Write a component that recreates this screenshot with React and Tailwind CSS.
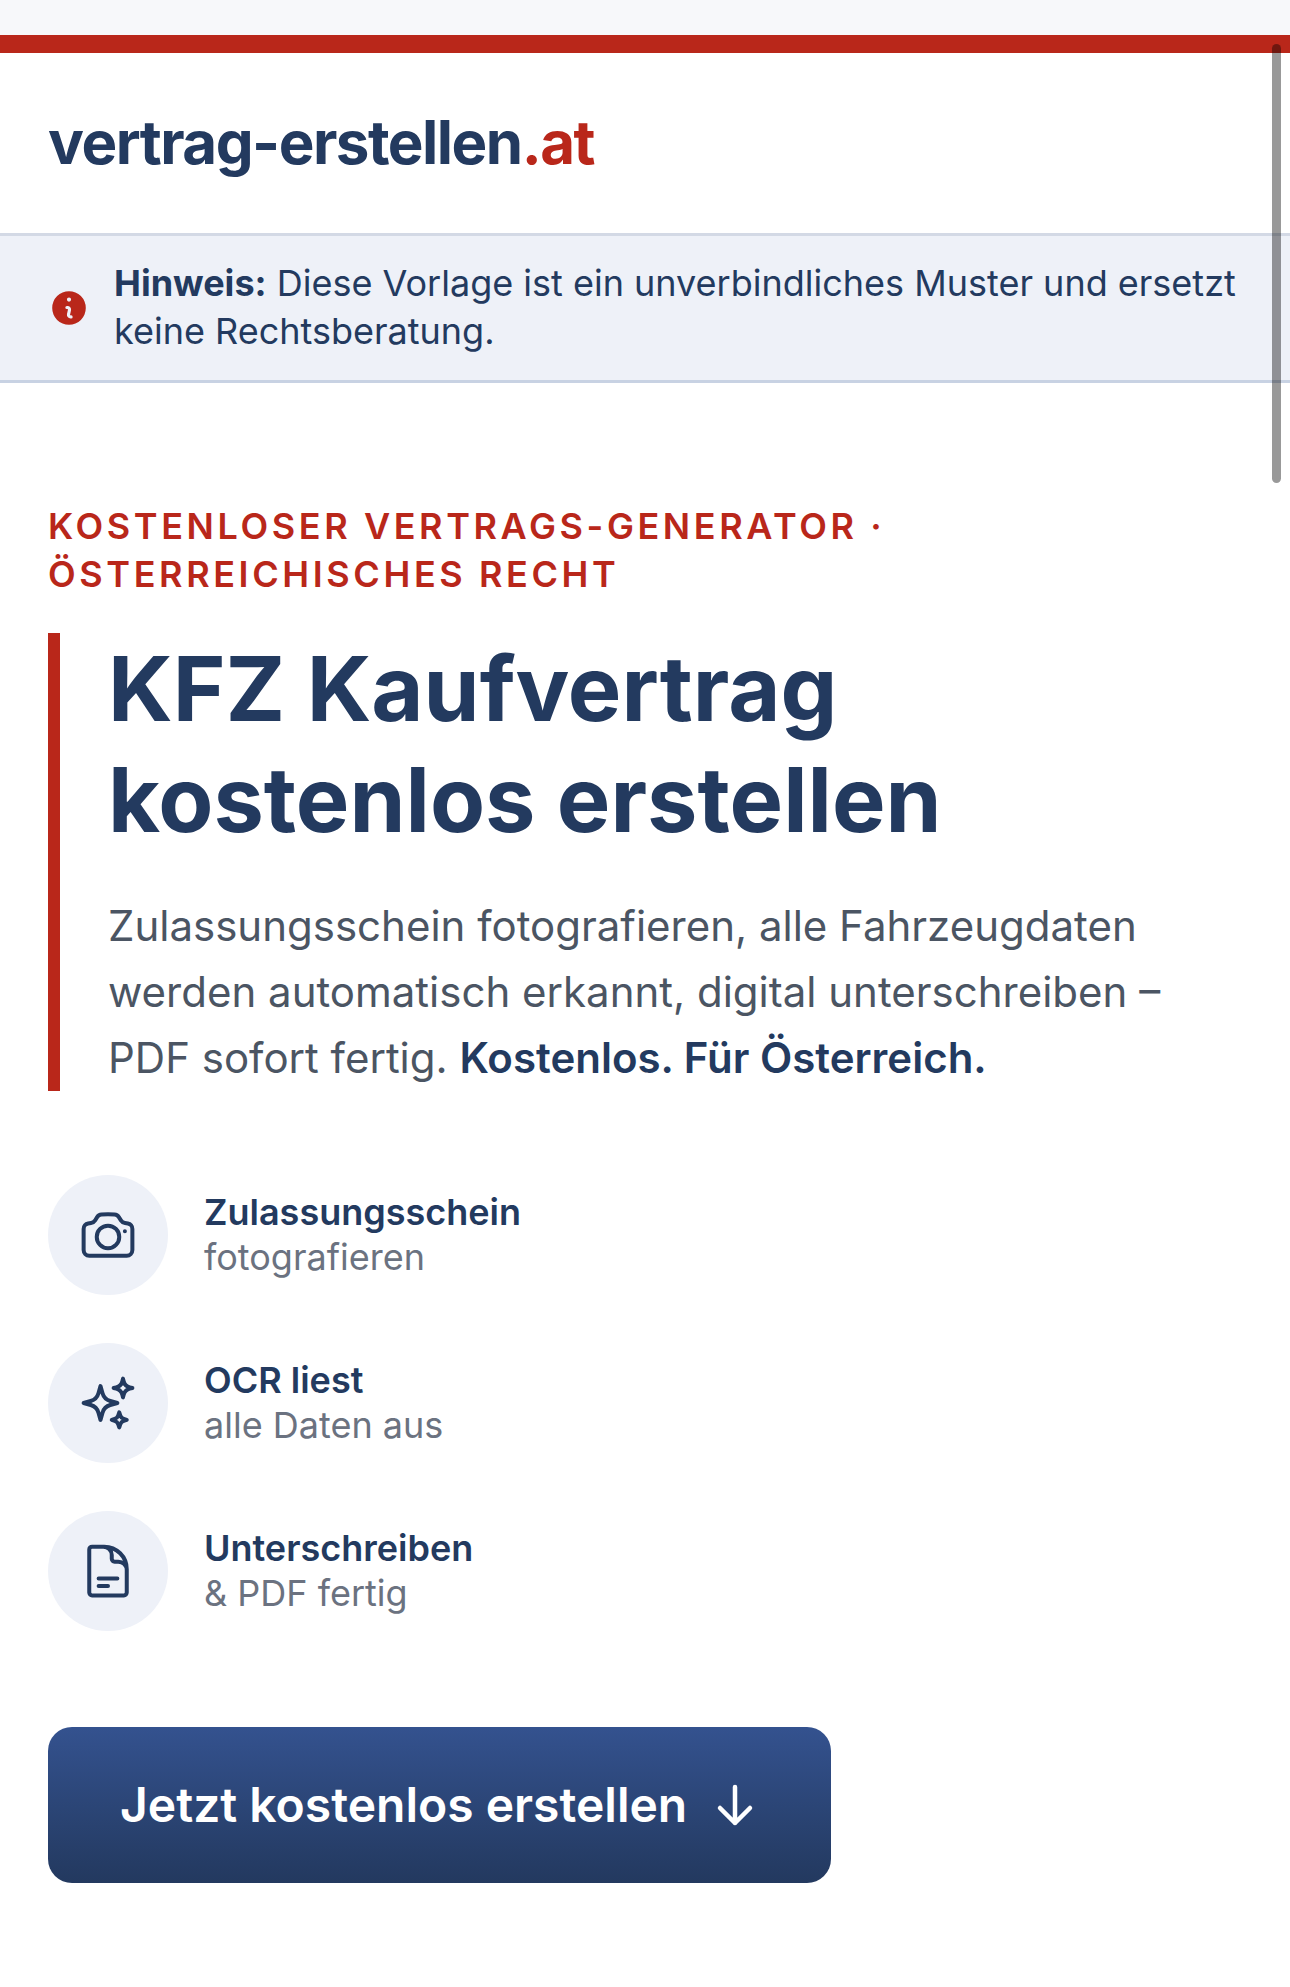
const steps = [
  { title: 'Zulassungsschein', sub: 'fotografieren', icon: 'camera' },
  { title: 'OCR liest', sub: 'alle Daten aus', icon: 'sparkles' },
  { title: 'Unterschreiben', sub: '& PDF fertig', icon: 'document' },
]

const iconPaths = {
  camera: (
    <>
      <path d="M6.827 6.175A2.31 2.31 0 0 1 5.186 7.23c-.38.054-.757.112-1.134.175C2.999 7.58 2.25 8.507 2.25 9.574V18a2.25 2.25 0 0 0 2.25 2.25h15A2.25 2.25 0 0 0 21.75 18V9.574c0-1.067-.75-1.994-1.802-2.169a47.865 47.865 0 0 0-1.134-.175 2.31 2.31 0 0 1-1.64-1.055l-.822-1.316a2.192 2.192 0 0 0-1.736-1.039 48.774 48.774 0 0 0-5.232 0 2.192 2.192 0 0 0-1.736 1.039l-.821 1.316Z" />
      <path d="M16.5 12.75a4.5 4.5 0 1 1-9 0 4.5 4.5 0 0 1 9 0ZM18.75 10.5h.008v.008h-.008V10.5Z" />
    </>
  ),
  sparkles: (
    <path d="M9.813 15.904 9 18.75l-.813-2.846a4.5 4.5 0 0 0-3.09-3.09L2.25 12l2.846-.813a4.5 4.5 0 0 0 3.09-3.09L9 5.25l.813 2.846a4.5 4.5 0 0 0 3.09 3.09L15.75 12l-2.846.813a4.5 4.5 0 0 0-3.09 3.09ZM18.259 8.715 18 9.75l-.259-1.035a3.375 3.375 0 0 0-2.455-2.456L14.25 6l1.036-.259a3.375 3.375 0 0 0 2.455-2.456L18 2.25l.259 1.035a3.375 3.375 0 0 0 2.456 2.456L21.75 6l-1.035.259a3.375 3.375 0 0 0-2.456 2.456ZM16.894 20.567 16.5 21.75l-.394-1.183a2.25 2.25 0 0 0-1.423-1.423L13.5 18.75l1.183-.394a2.25 2.25 0 0 0 1.423-1.423l.394-1.183.394 1.183a2.25 2.25 0 0 0 1.423 1.423l1.183.394-1.183.394a2.25 2.25 0 0 0-1.423 1.423Z" />
  ),
  document: (
    <path d="M19.5 14.25v-2.625a3.375 3.375 0 0 0-3.375-3.375h-1.5A1.125 1.125 0 0 1 13.5 7.125v-1.5a3.375 3.375 0 0 0-3.375-3.375H8.25m0 12.75h7.5m-7.5 3H12M10.5 2.25H5.625c-.621 0-1.125.504-1.125 1.125v17.25c0 .621.504 1.125 1.125 1.125h12.75c.621 0 1.125-.504 1.125-1.125V11.25a9 9 0 0 0-9-9Z" />
  ),
}

const Step = ({ title, sub, icon }) => (
  <div className="flex items-center gap-[36px]">
    <div className="w-[120px] h-[120px] rounded-full bg-[#eef1f8] flex items-center justify-center">
      <svg className="w-[60px] h-[60px] text-[#233a5f]" viewBox="0 0 24 24" fill="none" stroke="currentColor" strokeWidth="1.6" strokeLinecap="round" strokeLinejoin="round">
        {iconPaths[icon]}
      </svg>
    </div>
    <div>
      <div className="text-[36px] leading-[45px] font-semibold text-[#233a5f]">{title}</div>
      <div className="text-[36px] leading-[45px] text-[#6b7280]">{sub}</div>
    </div>
  </div>
)

const App = () => {
  return (
    <div className="relative w-full h-[1987px] overflow-hidden bg-white font-['Inter',sans-serif]">
      <div className="h-[35px] bg-[#f7f8fa]" />
      <div className="h-[18px] bg-[#b9271a]" />

      <header className="h-[183px] border-b-[3px] border-[#d3d9e5] px-12 pb-[2px] flex items-center">
        <div className="text-[60px] font-bold tracking-[-0.025em] text-[#233a5f]">
          vertrag-erstellen<span className="text-[#b9271a]">.at</span>
        </div>
      </header>

      <div className="h-[147px] bg-[#eef1f8] border-b-[3px] border-[#c8d2e3] px-12 pb-[2px] flex items-center gap-[24px]">
        <svg className="w-[42px] h-[42px] shrink-0 text-[#b9271a] mt-[2px]" viewBox="0 0 20 20" fill="currentColor">
          <path fillRule="evenodd" clipRule="evenodd" d="M18 10a8 8 0 1 1-16 0 8 8 0 0 1 16 0Zm-7-4a1 1 0 1 1-2 0 1 1 0 0 1 2 0ZM9 9a.75.75 0 0 0 0 1.5h.253a.25.25 0 0 1 .244.304l-.459 2.066A1.75 1.75 0 0 0 10.747 15H11a.75.75 0 0 0 0-1.5h-.253a.25.25 0 0 1-.244-.304l.459-2.066A1.75 1.75 0 0 0 9.253 9H9Z" />
        </svg>
        <p className="text-[36px] leading-[48px] text-[#233a5f]">
          <strong className="font-bold">Hinweis:</strong> Diese Vorlage ist ein unverbindliches Muster und ersetzt keine Rechtsberatung.
        </p>
      </div>

      <main className="px-12 pt-[119px]">
        <div className="text-[36px] leading-[48px] font-semibold tracking-[0.1em] uppercase text-[#b9271a]">
          Kostenloser Vertrags-Generator · Österreichisches Recht
        </div>

        <div className="mt-[37px] border-l-[12px] border-[#b9271a] pl-[48px]">
          <h1 className="-mt-[2px] text-[90px] leading-[111px] font-bold text-[#233a5f]">KFZ Kaufvertrag kostenlos erstellen</h1>
          <p className="mt-[38px] text-[42px] leading-[66px] text-[#4b5563]">
            Zulassungsschein fotografieren, alle Fahrzeugdaten werden automatisch erkannt, digital unterschreiben – PDF sofort fertig. <strong className="font-semibold text-[#233a5f]">Kostenlos. Für Österreich.</strong>
          </p>
        </div>

        <div className="mt-[84px] flex flex-col gap-[48px]">
          {steps.map(s => <Step key={s.title} {...s} />)}
        </div>

        <button className="mt-[96px] w-[783px] h-[156px] rounded-[24px] bg-gradient-to-b from-[#34528f] to-[#23395f] text-white text-[48px] font-semibold flex items-center pl-[72px] gap-[24px]">
          Jetzt kostenlos erstellen
          <svg className="w-12 h-12" viewBox="0 0 24 24" fill="none" stroke="currentColor" strokeWidth="2.25" strokeLinecap="round" strokeLinejoin="round">
            <path d="M19.5 13.5 12 21m0 0-7.5-7.5M12 21V3" />
          </svg>
        </button>
      </main>

      <div className="absolute left-[1272px] top-[44px] w-[9px] h-[439px] rounded-full bg-black/40" />
    </div>
  )
}

export default App
